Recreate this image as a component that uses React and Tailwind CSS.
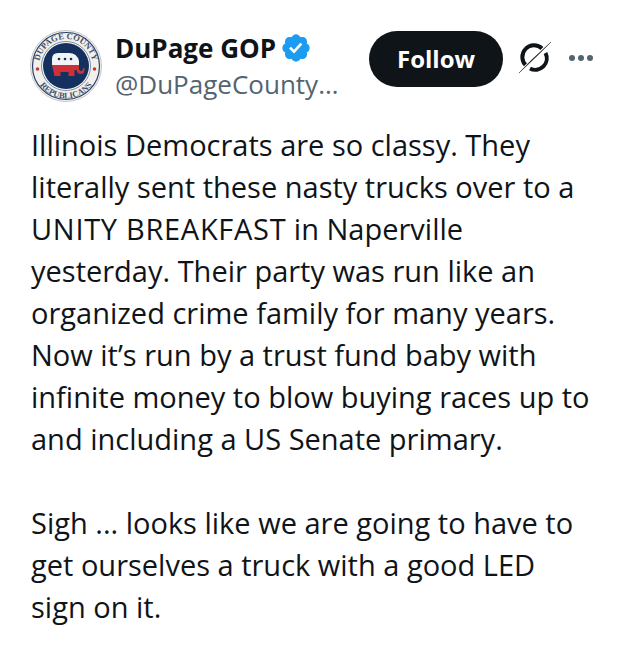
const lines = [
  "Illinois Democrats are so classy. They",
  "literally sent these nasty trucks over to a",
  <>
    <span className="tracking-[0.7px]">UNITY BREAKFAST</span> in Naperville
  </>,
  "yesterday. Their party was run like an",
  "organized crime family for many years.",
  "Now it’s run by a trust fund baby with",
  "infinite money to blow buying races up to",
  "and including a US Senate primary.",
  "",
  "Sigh ... looks like we are going to have to",
  "get ourselves a truck with a good LED",
  "sign on it.",
];

function Avatar() {
  return (
    <svg width="72" height="72" viewBox="0 0 72 72" className="shrink-0">
      <circle cx="36" cy="36" r="35.5" fill="#f1f0ec" stroke="#c3c7ce" />
      <circle cx="36" cy="36" r="33.5" fill="none" stroke="#2a4068" strokeWidth="1.2" />
      <circle cx="36" cy="36" r="24.5" fill="#f7f7f5" stroke="#7e8ca3" strokeWidth="1" />
      <circle cx="36" cy="36" r="23" fill="#14305f" />
      <defs>
        <path id="seal-top" d="M9 36a27 27 0 0 1 54 0" />
        <path id="seal-bottom" d="M3.5 36a32.5 32.5 0 0 0 65 0" />
      </defs>
      <text fontFamily="Liberation Serif, serif" fontSize="8.5" fontWeight="700" fill="#44506a">
        <textPath href="#seal-top" startOffset="50%" textAnchor="middle">DUPAGE COUNTY</textPath>
      </text>
      <text fontFamily="Liberation Serif, serif" fontSize="8.5" fontWeight="700" fill="#44506a">
        <textPath href="#seal-bottom" startOffset="50%" textAnchor="middle">REPUBLICANS</textPath>
      </text>
      <circle cx="7.5" cy="39" r="1.8" fill="#c8343c" />
      <circle cx="64.5" cy="39" r="1.8" fill="#c8343c" />
      <path d="M22 29q0-6 6-6h11q8 0 10 8v4H22z" fill="#f2f3f5" />
      <path d="M22 35h27v3q0 3 2 3t2-3h1.500q.5 6-3.500 6-4 0-4.500-4h-2v6h-6v-4h-8v4h-6z" fill="#cf2f38" />
      <circle cx="29" cy="29" r="1.300" fill="#14305f" />
      <circle cx="35" cy="29" r="1.300" fill="#14305f" />
      <circle cx="41" cy="29" r="1.300" fill="#14305f" />
    </svg>
  );
}

function VerifiedBadge() {
  return (
    <svg width="32" height="32" viewBox="0 0 22 22" className="shrink-0">
      <path
        fill="#1d9bf0"
        d="M20.396 11c-.018-.646-.215-1.275-.57-1.816-.354-.54-.852-.972-1.438-1.246.223-.607.27-1.264.14-1.897-.131-.634-.437-1.218-.882-1.687-.47-.445-1.053-.75-1.687-.882-.633-.13-1.29-.083-1.897.14-.273-.587-.704-1.086-1.245-1.44S11.647 1.62 11 1.604c-.646.017-1.273.213-1.813.568s-.969.854-1.24 1.44c-.608-.223-1.267-.272-1.902-.14-.635.13-1.22.436-1.69.882-.445.47-.749 1.055-.878 1.688-.13.633-.08 1.29.144 1.896-.587.274-1.087.705-1.443 1.245-.356.54-.555 1.17-.574 1.817.02.647.218 1.276.574 1.817.356.54.856.972 1.443 1.245-.224.606-.274 1.263-.144 1.896.13.634.433 1.218.877 1.688.47.443 1.054.747 1.687.878.633.132 1.29.084 1.897-.136.274.586.705 1.084 1.246 1.439.54.354 1.17.551 1.816.569.647-.016 1.276-.213 1.817-.567s.972-.854 1.245-1.44c.604.239 1.266.296 1.903.164.636-.132 1.22-.447 1.68-.907.46-.46.776-1.044.908-1.681s.075-1.299-.165-1.903c.586-.274 1.084-.705 1.439-1.246.354-.54.551-1.17.569-1.816z"
      />
      <path fill="#fff" d="M9.662 14.85l-3.429-3.428 1.293-1.302 2.072 2.072 4.4-4.794 1.347 1.246z" />
    </svg>
  );
}

function GrokIcon() {
  return (
    <svg width="34" height="34" viewBox="0 0 34 34" fill="none" className="shrink-0">
      <path d="M24 7.500A11.500 11.500 0 0 0 8 24.500" stroke="#0f1419" strokeWidth="4" />
      <path d="M27.500 12A11.500 11.500 0 0 1 12 27.500" stroke="#0f1419" strokeWidth="4" />
      <path d="M1 32 33 1" stroke="#fff" strokeWidth="3" />
      <path d="M1 32 13 19.500 33 1 20.500 13.500z" fill="#0f1419" stroke="#0f1419" strokeWidth="0.4" />
    </svg>
  );
}

export default function App() {
  return (
    <div className="min-h-[656px] w-[624px] bg-white font-['Open_Sans',sans-serif] text-[#0f1419]">
      <header className="flex items-start pl-[30px] pt-[30px]">
        <Avatar />
        <div className="ml-[13px] w-[235px] shrink-0">
          <div className="flex h-[36px] items-center gap-[4px] text-[26px] font-bold">
            <span>DuPage GOP</span>
            <VerifiedBadge />
          </div>
          <div className="text-[26px] leading-[36px] text-[#536471]">@DuPageCounty…</div>
        </div>
        <button className="ml-[19px] mt-px h-14 w-[134px] shrink-0 rounded-full bg-[#0f1419] text-[24px] font-bold text-white">
          Follow
        </button>
        <div className="ml-[15px] mt-[11px]">
          <GrokIcon />
        </div>
        <div className="ml-[17px] mt-[25px] flex gap-[3px]">
          <span className="size-[6px] rounded-full bg-[#536471]" />
          <span className="size-[6px] rounded-full bg-[#536471]" />
          <span className="size-[6px] rounded-full bg-[#536471]" />
        </div>
      </header>
      <div className="mt-[22px] pl-[31px] text-[29px] leading-[42px] whitespace-nowrap">
        {lines.map((line, i) => (
          <div key={i} className="h-[42px]">{line}</div>
        ))}
      </div>
    </div>
  );
}
